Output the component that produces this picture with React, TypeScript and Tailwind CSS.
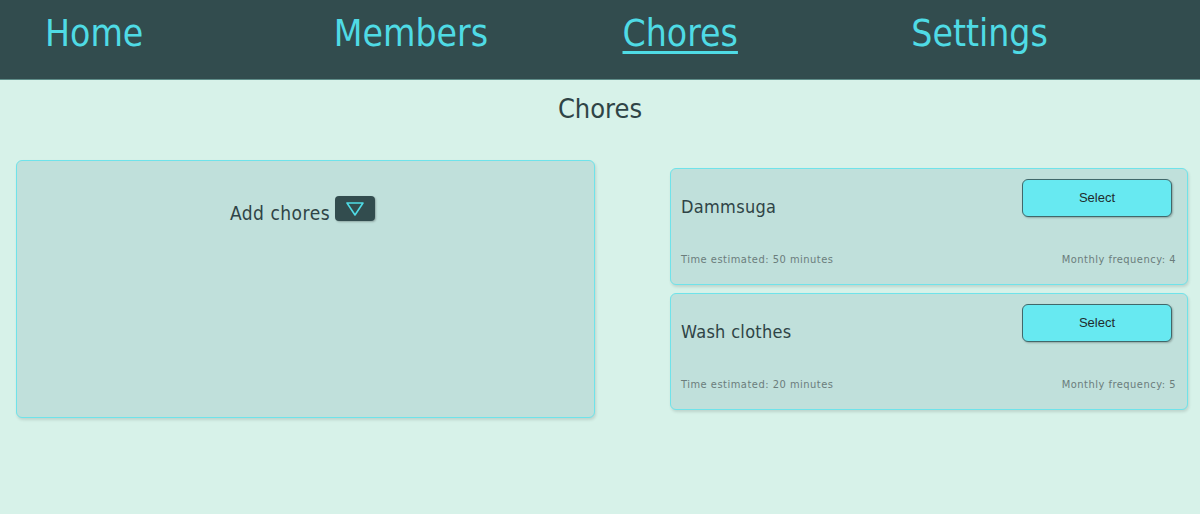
import React from 'react';

const font = { fontFamily: '"DejaVu Sans Condensed", "DejaVu Sans", sans-serif' };

const navItems = [
    { label: 'Home', active: false },
    { label: 'Members', active: false },
    { label: 'Chores', active: true },
    { label: 'Settings', active: false },
];

const chores = [
    { name: 'Dammsuga', minutes: 50, frequency: 4 },
    { name: 'Wash clothes', minutes: 20, frequency: 5 },
];

const ChoreCard: React.FC<{ name: string; minutes: number; frequency: number }> = ({ name, minutes, frequency }) => (
    <div className="h-[117px] flex flex-col bg-[#c0e0db] border border-[#6fe3ea] rounded-md shadow-[1px_2px_3px_rgba(0,0,0,0.12)] pl-[10px] pr-[11px] pt-[10px] pb-[16px]">
        <div className="flex items-start justify-between">
            <span className="mt-[16px] text-[18px] leading-6 text-[#2f4446] tracking-[0.3px]">{name}</span>
            <button
                className="w-[150px] h-[38px] mr-[4px] bg-[#67e9f1] border border-[#41686a] rounded-md text-[13px] text-[#1f2d2e] shadow-[1px_1px_2px_rgba(0,0,0,0.25)]"
                style={{ fontFamily: '"Liberation Sans", Arial, sans-serif' }}
            >
                Select
            </button>
        </div>
        <div className="mt-auto flex justify-between text-[11px] text-[#6b7d7c] tracking-[0.5px]">
            <span>Time estimated: {minutes} minutes</span>
            <span>Monthly frequency: {frequency}</span>
        </div>
    </div>
);

export default function App() {
    return (
        <div className="min-h-[514px] bg-[#d7f2e9]" style={font}>
            {/* nav */}
            <nav className="h-20 bg-[#324c4e] flex items-center pl-[45px] border-b border-[#5f8d89]">
                {navItems.map((item) => (
                    <a
                        key={item.label}
                        className={`w-[290px] text-[37px] leading-none text-[#4fdbe5] pb-[12px] ${item.active ? 'underline decoration-[3px] underline-offset-[5px]' : ''}`}
                    >
                        <span>{item.label}</span>
                    </a>
                ))}
            </nav>

            <h1 className="mt-[12px] text-center text-[27px] leading-[34px] text-[#2f4446]">Chores</h1>

            <div className="mt-[34px] flex items-start px-4">
                <div className="w-[579px] h-[258px] bg-[#c0e0db] border border-[#6fe3ea] rounded-md shadow-[1px_2px_3px_rgba(0,0,0,0.12)] pt-[35px] flex justify-center">
                    <div className="flex items-start gap-[5px] -ml-[6px]">
                        <span className="text-[19px] leading-6 mt-[5px] text-[#2f4446] tracking-[0.5px]">Add chores</span>
                        <button className="w-10 h-[25px] bg-[#324c4e] rounded-[4px] flex items-center justify-center shadow-[1px_1px_2px_rgba(0,0,0,0.25)]">
                            <svg width="20" height="16" viewBox="0 0 20 16" fill="none">
                                <path d="M2 2 H18 L10 14 Z" stroke="#4fdbe5" strokeWidth="1.6" strokeLinejoin="round" />
                            </svg>
                        </button>
                    </div>
                </div>
                <div className="ml-auto mr-[-4px] mt-[8px] w-[518px] flex flex-col gap-2">
                    {chores.map((c) => (
                        <ChoreCard key={c.name} {...c} />
                    ))}
                </div>
            </div>
        </div>
    );
}
